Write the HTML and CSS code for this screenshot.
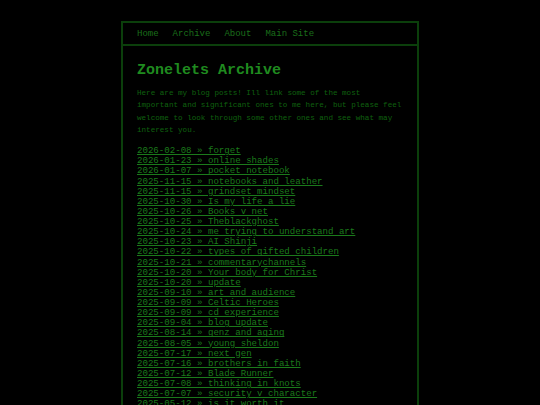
FILE: index.html
```html
<!DOCTYPE html>
<html>
<head>
<meta charset="utf-8">
<link rel="stylesheet" href="styles.css">
</head>
<body>
<div class="wrap">
  <nav class="nav">
    <a href="#">Home</a>
    <a href="#">Archive</a>
    <a href="#">About</a>
    <a href="#">Main Site</a>
  </nav>
  <main class="content">
    <h1 class="title">Zonelets Archive</h1>
    <p class="intro">Here are my blog posts! Ill link some of the most important and significant ones to me here, but please feel welcome to look through some other ones and see what may interest you.</p>
    <ul class="posts">
      <li><a href="#">2026-02-08 » forget</a></li>
      <li><a href="#">2026-01-23 » online shades</a></li>
      <li><a href="#">2026-01-07 » pocket notebook</a></li>
      <li><a href="#">2025-11-15 » notebooks and leather</a></li>
      <li><a href="#">2025-11-15 » grindset mindset</a></li>
      <li><a href="#">2025-10-30 » Is my life a lie</a></li>
      <li><a href="#">2025-10-26 » Books v net</a></li>
      <li><a href="#">2025-10-25 » Theblackghost</a></li>
      <li><a href="#">2025-10-24 » me trying to understand art</a></li>
      <li><a href="#">2025-10-23 » AI Shinji</a></li>
      <li><a href="#">2025-10-22 » types of gifted children</a></li>
      <li><a href="#">2025-10-21 » commentarychannels</a></li>
      <li><a href="#">2025-10-20 » Your body for Christ</a></li>
      <li><a href="#">2025-10-20 » update</a></li>
      <li><a href="#">2025-09-10 » art and audience</a></li>
      <li><a href="#">2025-09-09 » Celtic Heroes</a></li>
      <li><a href="#">2025-09-09 » cd experience</a></li>
      <li><a href="#">2025-09-04 » blog update</a></li>
      <li><a href="#">2025-08-14 » genz and aging</a></li>
      <li><a href="#">2025-08-05 » young sheldon</a></li>
      <li><a href="#">2025-07-17 » next gen</a></li>
      <li><a href="#">2025-07-16 » brothers in faith</a></li>
      <li><a href="#">2025-07-12 » Blade Runner</a></li>
      <li><a href="#">2025-07-08 » thinking in knots</a></li>
      <li><a href="#">2025-07-07 » security v character</a></li>
      <li><a href="#">2025-05-12 » is it worth it</a></li>
    </ul>
  </main>
</div>
</body>
</html>
```

FILE: styles.css
```css
html, body {
  margin: 0;
  padding: 0;
  background: #000;
}
body {
  font-family: "Liberation Mono", "Courier New", monospace;
  padding-top: 21px;
}
.wrap {
  width: 294px;
  margin: 0 auto;
  border: 2px solid #0b3f0b;
  border-bottom: none;
  min-height: 400px;
}
.nav {
  display: flex;
  gap: 14px;
  padding: 0 14px;
  height: 21px;
  align-items: center;
  border-bottom: 2px solid #0b3f0b;
  font-size: 9px;
}
.nav a {
  color: #1a6e1a;
  text-decoration: none;
}
.content {
  padding: 0 0 0 14px;
}
.title {
  margin: 15px 0 0 0;
  font-size: 15px;
  line-height: 20px;
  font-weight: bold;
  color: #1f8a1f;
}
.intro {
  margin: 6px 0 0 0;
  font-size: 7.6px;
  line-height: 12.3px;
  color: #0f610f;
  width: 267px;
}
.posts {
  list-style: none;
  margin: 10px 0 0 0;
  padding: 0;
  font-size: 9.1px;
  line-height: 10.12px;
}
.posts a {
  color: #1b7a1b;
  text-decoration: underline;
  white-space: nowrap;
}
```
